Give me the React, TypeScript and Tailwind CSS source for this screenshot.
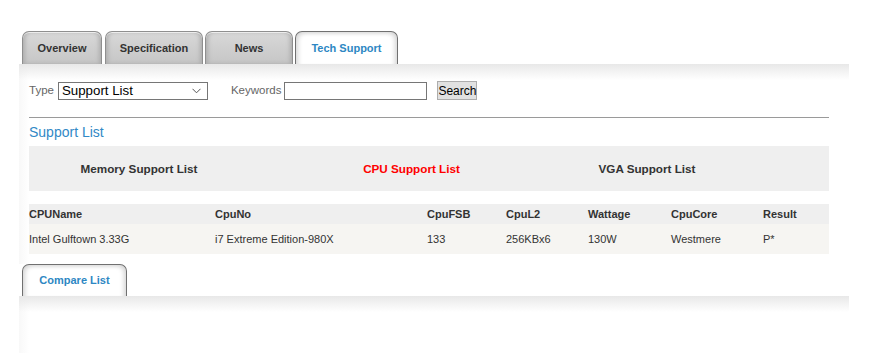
import React from "react";

const inactiveTab =
  "h-[33px] flex items-center justify-center rounded-t-[7px] border border-b-0 border-[#8f8f8f] bg-[linear-gradient(to_bottom,#d8d8d8,#c6c6c6)] shadow-[inset_0_1px_0_#ececec,inset_3px_0_4px_-1px_#adadad,inset_-3px_0_4px_-1px_#adadad] text-[11px] font-bold text-[#333]";
const activeTab =
  "flex items-center justify-center rounded-t-[7px] border border-b-0 border-[#707070] bg-white shadow-[inset_4px_2px_5px_-2px_#d4d4d4,inset_-4px_2px_5px_-2px_#d4d4d4] text-[11px] font-bold text-[#2d87c3]";

const panelBg =
  "bg-[linear-gradient(to_bottom,#e8e8e8,rgba(255,255,255,0)_16px),linear-gradient(to_right,#f8f8f8,#ffffff_10px)]";

const cols = "grid grid-cols-[186px_212px_79px_82px_83px_92px_66px]";

export default function App() {
  return (
    <div className="w-[876px] h-[353px] bg-white pt-[31px] font-['Liberation_Sans',Arial,sans-serif] overflow-hidden">
      {/* Tabs */}
      <div className="flex pl-[22px] h-[33px]">
        <div className={`${inactiveTab} w-[80px] mr-[3px]`}>Overview</div>
        <div className={`${inactiveTab} w-[98px] mr-[2px]`}>Specification</div>
        <div className={`${inactiveTab} w-[88px] mr-[2px]`}>News</div>
        <div className={`${activeTab} h-[33px] w-[103px]`}>Tech Support</div>
      </div>

      {/* Main panel */}
      <div className={`ml-[19px] w-[830px] pl-[10px] pt-[17px] pb-[10px] ${panelBg}`}>
        <div className="w-[800px]">
          <div className="flex items-center h-[19px] text-[11.5px] text-[#666]">
            <span className="mr-[4px]">Type</span>
            <div className="w-[150px] h-[18px] border border-[#767676] bg-white flex items-center justify-between pl-[3px] pr-[6px] text-[13.3px] text-black">
              <span>Support List</span>
              <svg width="9" height="6" viewBox="0 0 9 6" fill="none" stroke="#555" strokeWidth="1">
                <path d="M0.5 0.8 L4.5 4.8 L8.5 0.8" />
              </svg>
            </div>
            <span className="ml-[23px] mr-[3px]">Keywords</span>
            <div className="w-[143px] h-[18px] border border-[#767676] bg-white" />
            <div className="ml-[10px] h-[19px] w-[40px] border border-[#adadad] bg-[#e1e1e1] flex items-center justify-center text-[12px] text-black">
              Search
            </div>
          </div>

          <div className="mt-[17px] h-px bg-[#9a9a9a]" />

          <div className="h-[28px] flex items-center text-[14px] text-[#3189c6]">
            Support List
          </div>

          <div className="h-[45px] bg-[#efefef] grid grid-cols-[220px_325px_146px] items-center justify-items-center text-[11.7px] font-bold">
            <span className="text-[#333]">Memory Support List</span>
            <span className="text-[#ff0000]">CPU Support List</span>
            <span className="text-[#333]">VGA Support List</span>
          </div>

          <div className={`${cols} mt-[13px] h-[20px] items-center bg-[#efefef] text-[11px] font-bold text-[#333]`}>
            <span>CPUName</span>
            <span>CpuNo</span>
            <span>CpuFSB</span>
            <span>CpuL2</span>
            <span>Wattage</span>
            <span>CpuCore</span>
            <span>Result</span>
          </div>
          <div className={`${cols} h-[30px] items-center bg-[#f6f5f2] text-[11px] text-[#333]`}>
            <span>Intel Gulftown 3.33G</span>
            <span>i7 Extreme Edition-980X</span>
            <span>133</span>
            <span>256KBx6</span>
            <span>130W</span>
            <span>Westmere</span>
            <span>P*</span>
          </div>
        </div>
      </div>

      {/* Compare tab */}
      <div className="flex pl-[22px] h-[32px]">
        <div className={`${activeTab} h-[32px] w-[105px]`}>Compare List</div>
      </div>
      <div className={`ml-[19px] w-[830px] h-[80px] ${panelBg}`} />
    </div>
  );
}
